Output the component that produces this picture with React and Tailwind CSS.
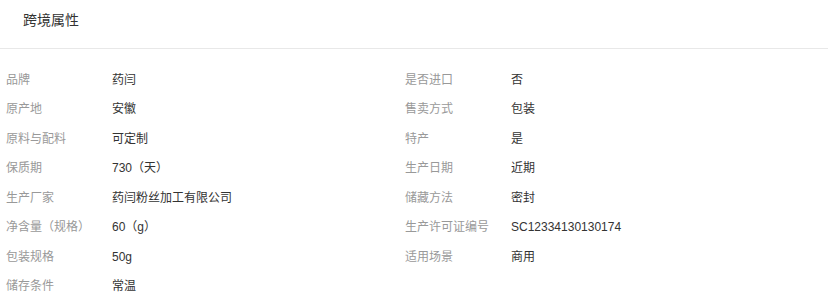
import React from 'react'

const ATTRS = [
  ['品牌', '药闫'],
  ['是否进口', '否'],
  ['原产地', '安徽'],
  ['售卖方式', '包装'],
  ['原料与配料', '可定制'],
  ['特产', '是'],
  ['保质期', '730（天）'],
  ['生产日期', '近期'],
  ['生产厂家', '药闫粉丝加工有限公司'],
  ['储藏方法', '密封'],
  ['净含量（规格）', '60（g）'],
  ['生产许可证编号', 'SC12334130130174'],
  ['包装规格', '50g'],
  ['适用场景', '商用'],
  ['储存条件', '常温'],
]

export default function App() {
  return (
    <div
      className="w-[828px] h-[303px] bg-white overflow-hidden"
      style={{ fontFamily: '"Liberation Sans", "Noto Sans CJK SC", sans-serif' }}
    >
      {/* ── Header ── */}
      <div className="h-[49px] border-b border-[#e8e8e8] pl-[23px] pt-[8px]">
        <span className="text-[14px] leading-[18px] text-[#333]">跨境属性</span>
      </div>

      {/* ── Attribute grid ── */}
      <div className="grid grid-cols-[399px_399px] pt-[16px]">
        {ATTRS.map(([label, value]) => (
          <div key={label} className="flex items-center h-[29.5px] pl-[6px] text-[12px]">
            <span className="w-[106px] shrink-0 text-[#999]">{label}</span>
            <span className="text-[#333]">{value}</span>
          </div>
        ))}
      </div>
    </div>
  )
}
